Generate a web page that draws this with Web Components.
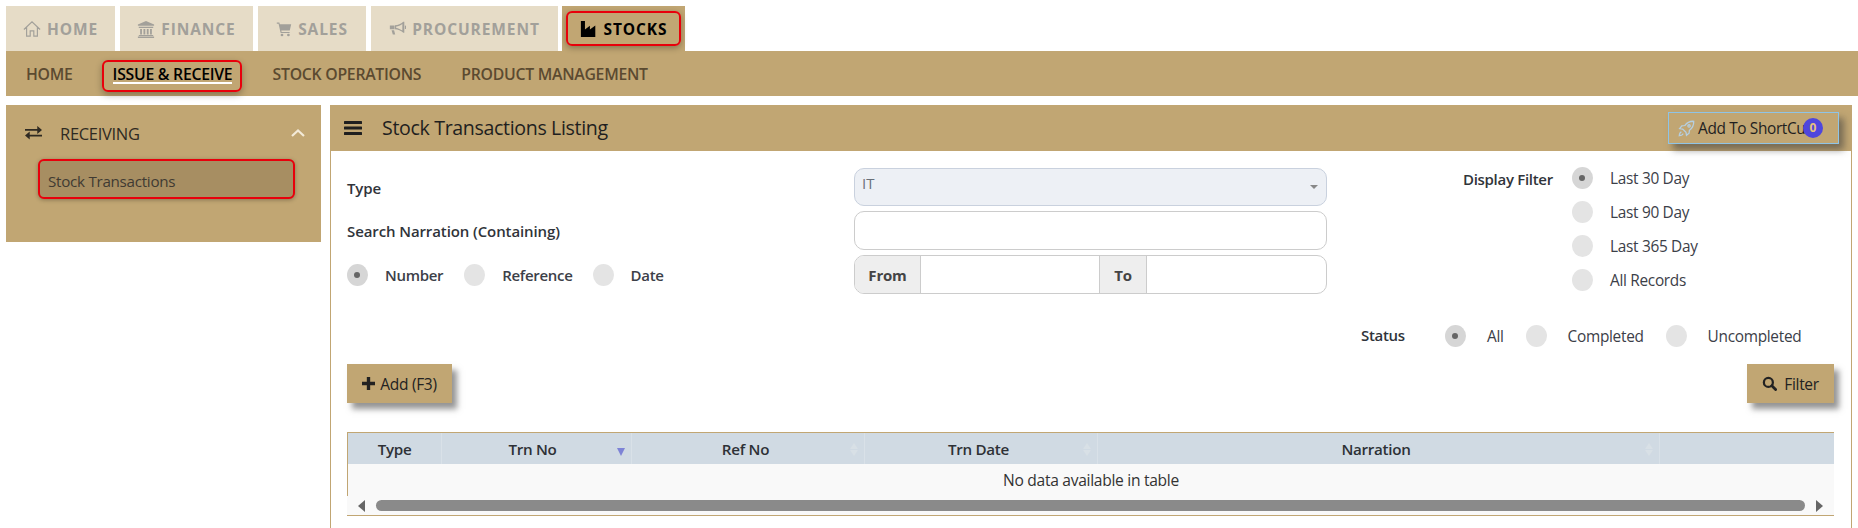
<!DOCTYPE html>
<html><head><meta charset="utf-8"><title>Stock Transactions Listing</title>
<style>
html,body{margin:0;padding:0;background:#fff;height:528px;overflow:hidden;font-family:"Open Sans","Noto Sans",sans-serif;color:#333}
</style></head><body>
<erp-app></erp-app>
<script>
const ICONS={
home:'<svg viewBox="0 0 20 20" width="18" height="18" fill="none" stroke="currentColor" stroke-width="1.3"><path d="M1 10.5 10 2l9 8.5M4 8v10h4v-6h4v6h4V8"/></svg>',
bank:'<svg viewBox="0 0 20 20" width="18" height="18" fill="currentColor"><path d="M10 1 1 5v1.5h18V5zM2 7.5h16V9H2zM3.5 10h2v6h-2zM7.2 10h2v6h-2zM10.9 10h2v6h-2zM14.5 10h2v6h-2zM2 16.7h16v1.2H2zM1 18.3h18V20H1z"/></svg>',
cart:'<svg viewBox="0 0 20 20" width="16" height="16" fill="currentColor"><path d="M1 2h3.2l.6 2H19l-1.8 8H6.6l.4 1.6h10V15H5.8L3.2 3.5H1z"/><circle cx="7.5" cy="17.5" r="1.7"/><circle cx="15.5" cy="17.5" r="1.7"/></svg>',
horn:'<svg viewBox="0 0 20 20" width="17" height="17" fill="currentColor"><path d="M18 2v13h-1.200C14 12.400 10.500 11 7 10.800V6.200C10.500 6 14 4.600 16.800 2zM15.700 4.600C13.500 6.300 11 7.300 8.500 7.700v1.600c2.500.4 5 1.400 7.200 3.100zM18.700 6.500a2 2 0 0 1 0 4zM1 6.500h5.500v4.500H1zM3 12h3l1.300 5H4.500z"/></svg>',
factory:'<svg viewBox="0 0 20 20" width="18" height="20" fill="currentColor"><path d="M1 1h4.500v9.500L11 6.500v4l6-4.500V19H1z"/></svg>',
swap:'<svg viewBox="0 0 18 14" width="17" height="14" fill="currentColor"><path d="M0 2.700h13V-.5l5 4.300-5 4.200V4.700H0z"/><path d="M18 10.800H5V14L0 9.700l5-4.200v3.300h13z"/></svg>',
bars:'<svg viewBox="0 0 18 14" width="18" height="14" fill="currentColor"><rect width="18" height="3" rx=".6"/><rect y="5.500" width="18" height="3" rx=".6"/><rect y="11" width="18" height="3" rx=".6"/></svg>',
rocket:'<svg viewBox="0 0 20 20" width="17" height="17" fill="none" stroke="#b5cfe2" stroke-width="1.500"><path d="M18.500 1.500c-4.500-.2-8 1.500-10.500 5L4.500 7 2 10l3.500.6 3.900 3.900.6 3.500 3-2.500.5-3.500c3.500-2.500 5.200-6 5-10.500z"/><circle cx="13" cy="7" r="1.400"/><path d="M4 14c-1.500.5-2.300 2-2.500 4.500 2.500-.2 4-1 4.500-2.500" /></svg>',
plus:'<svg viewBox="0 0 14 14" width="13" height="13" fill="currentColor"><path d="M5.200 0h3.600v5.200H14v3.600H8.800V14H5.200V8.800H0V5.200h5.200z"/></svg>',
search:'<svg viewBox="0 0 16 16" width="15" height="15" fill="none" stroke="currentColor"><circle cx="6.800" cy="6.800" r="4.800" stroke-width="2.400"/><path d="m10.500 10.500 4 4" stroke-width="3" stroke-linecap="round"/></svg>'
};
function def(name,css,html){
  class C extends HTMLElement{
    constructor(){super();this.attachShadow({mode:'open'});}
    connectedCallback(){this.shadowRoot.innerHTML='<style>'+css+'</style>'+(typeof html==='function'?html(this):html);}
  }
  customElements.define(name,C);
}
def('top-tab',`
:host{display:flex;align-items:center;justify-content:center;gap:6px;height:45px;box-sizing:border-box;background:#e6dcc7;color:#a2a09a;font:700 15.5px "Open Sans",sans-serif;letter-spacing:.9px}
:host([active]){background:#c1a673;color:#000}
.box{display:flex;align-items:center;gap:6px;}
:host([active]) .box{height:35px;width:115px;box-sizing:border-box;justify-content:center;border:2px solid #e8000b;border-radius:6px;box-shadow:0 2px 6px rgba(0,0,0,.3)}
svg{display:block}
`,h=>`<div class="box">${ICONS[h.getAttribute('icon')]}<slot></slot></div>`);
def('sub-item',`
:host{display:flex;align-items:center;height:45px;color:#5b4a30;font:600 15.8px "Open Sans",sans-serif;letter-spacing:-.27px;white-space:nowrap}
:host([active]) .box{color:#000;width:140px;height:32px;box-sizing:border-box;margin-top:5px;padding:3px 0 0 9px;border:2px solid #e8000b;border-radius:6px;box-shadow:0 3px 7px rgba(0,0,0,.3);display:flex;align-items:flex-start;line-height:18px}
:host([active]) span{border-bottom:2px solid #fff;display:block;height:17px}
`,`<div class="box"><span><slot></slot></span></div>`);
def('radio-opt',`
:host{display:inline-flex;align-items:center;font:15.4px "Open Sans",sans-serif;color:#3c4048;letter-spacing:-.3px;height:22px;gap:var(--g,17px)}
i{display:block;width:21px;height:22px;border-radius:50%;background:#e4e4e4;position:relative;flex:none}
:host([checked]) i{background:#d6d6d6}
:host([checked]) i::after{content:"";position:absolute;left:7px;top:8px;width:6px;height:6px;border-radius:50%;background:#666}
:host(.w){font-size:15px;font-weight:600;letter-spacing:-.3px}
`,`<i></i><span><slot></slot></span>`);
def('tan-btn',`
:host{display:flex;align-items:center;justify-content:center;gap:var(--bg,5px);height:39px;box-sizing:border-box;background:#c1a673;color:#222;font:15.500px "Open Sans",sans-serif;letter-spacing:-.3px;box-shadow:5px 6px 6px rgba(60,60,60,.55)}
svg{display:block}
`,h=>`${ICONS[h.getAttribute('icon')]}<slot></slot>`);
def('side-panel',`
:host{display:block;flex:none;width:315px;height:137px;background:#c1a673;box-sizing:border-box;padding-top:19px}
.head{display:flex;align-items:center;height:18px;padding:0 16px 0 19px;color:#2f2a22;font:16.500px "Open Sans",sans-serif;letter-spacing:-.3px}
.head svg:first-child{margin-right:18px}
.head span{flex:1}
.item{margin:17px 26px 0 32px;height:40px;box-sizing:border-box;background:#a78e62;border:2px solid #e8000b;border-radius:6px;padding:4px 0 0 8px;display:flex;align-items:center;color:#403a32;font:15.200px "Open Sans",sans-serif;letter-spacing:-.28px;box-shadow:0 1px 4px rgba(0,0,0,.3)}
`,`<div class="head">${ICONS.swap}<span>RECEIVING</span><svg width="14" height="8" viewBox="0 0 14 8" fill="none" stroke="#f3ead8" stroke-width="2.200"><path d="m1 7 6-5.500L13 7"/></svg></div><div class="item">Stock Transactions</div>`);
def('panel-head',`
:host{display:flex;align-items:center;height:46px;background:#c1a673;padding:0 13px 0 14px;box-sizing:border-box;color:#1f1f1f;position:relative;font:19.600px "Open Sans",sans-serif;letter-spacing:-.35px}
.t{flex:1;margin-left:20px;margin-top:-1px}
.sc{width:171px;height:32px;box-sizing:border-box;border:1px solid #8fc4e6;box-shadow:5px 6px 7px rgba(60,60,60,.55);display:flex;align-items:center;padding-left:9px;gap:3px;font-size:15.400px;letter-spacing:-.35px;position:relative;background:#c1a673;white-space:nowrap}
.b{position:absolute;left:134px;top:5px;width:20px;height:20px;border-radius:50%;background:#4f46dc;color:#e7c37b;font:700 12px/20px "Open Sans",sans-serif;text-align:center;letter-spacing:0}
svg{display:block;flex:none}
`,`${ICONS.bars}<span class="t">Stock Transactions Listing</span><div class="sc">${ICONS.rocket}<span>Add To ShortCut</span><span class="b">0</span></div>`);
def('form-field',`
:host{display:flex;align-items:center;box-sizing:border-box;width:473px;font:15px "Open Sans",sans-serif}
.sel{flex:1;height:38px;box-sizing:border-box;border:1px solid #c9d1de;border-radius:10px;background:#edf0f5;padding:0 8px 0 7px;color:#6a7079;display:flex;justify-content:space-between}
.sel span{margin-top:4px}
.sel i{margin-top:16px;width:0;height:0;border:4px solid transparent;border-top:4px solid #888;border-bottom:0}
.inp{flex:1;height:39px;box-sizing:border-box;border:1px solid #ccc;border-radius:10px;background:#fff}
.grp{flex:1;height:39px;box-sizing:border-box;border:1px solid #ccc;border-radius:10px;overflow:hidden;display:grid;grid-template-columns:66px 178px 48px 1fr;background:#fff}
.grp b{background:#eee;display:flex;align-items:center;justify-content:center;color:#444;font-weight:700;letter-spacing:-.2px;border-right:1px solid #ccc}
.grp b.to{border-left:1px solid #ccc}
`,h=>{const k=h.getAttribute('kind');
 if(k==='select')return `<div class="sel"><span>IT</span><i></i></div>`;
 if(k==='range')return `<div class="grp"><b>From</b><div></div><b class="to">To</b><div></div></div>`;
 return `<div class="inp"></div>`;});
def('data-grid',`
:host{display:block;font:15.200px "Open Sans",sans-serif;color:#333;letter-spacing:-.3px;border-top:1px solid #c1a673;border-bottom:1px solid #c1a673}
.h{display:grid;grid-template-columns:94px 190px 233px 233px 562px 175px;height:31px;background:#d0dae3;color:#2e3136;font-weight:600;border-left:1px solid #c1a673;box-sizing:border-box}
.c{display:flex;align-items:center;justify-content:center;position:relative;border-right:1px solid #d9e1e8;box-sizing:border-box}
.c:last-child{border-right:0}
.p5{padding-right:5px}
.p8{padding-right:8px}
.s{position:absolute;right:6px;top:10px;width:0;height:0;border:4.500px solid transparent;border-bottom:6px solid #d8e0e6;border-top:0}
.s::after{content:"";position:absolute;left:-4.500px;top:7px;width:0;height:0;border:4.500px solid transparent;border-top:6px solid #d8e0e6;border-bottom:0}
.d{position:absolute;right:6px;top:15px;width:0;height:0;border:4.500px solid transparent;border-top:8px solid #7d83d6;border-bottom:0}
.r{height:32px;background:#f9f9f9;display:flex;align-items:center;justify-content:center;color:#333;border-left:1px solid #c1a673;box-sizing:border-box;font-size:15.6px}
.bar{height:19px;background:#f9f9f9;display:flex;align-items:center;padding:0 11px;box-sizing:border-box;gap:11px}
.th{flex:1;height:11px;background:#8a8a8a;border-radius:6px}
.l{width:0;height:0;border:6px solid transparent;border-left:0;border-right:7px solid #666}
.rr{width:0;height:0;border:6px solid transparent;border-right:0;border-left:7px solid #666}
`,`<div class="h"><div class="c">Type</div><div class="c p8">Trn No<span class="d"></span></div><div class="c p5">Ref No<span class="s"></span></div><div class="c p5">Trn Date<span class="s"></span></div><div class="c p5">Narration<span class="s"></span></div><div class="c"></div></div><div class="r">No data available in table</div><div class="bar"><span class="l"></span><div class="th"></div><span class="rr"></span></div>`);
def('stock-form',`
:host{display:block;border:solid #c1a673;border-width:0 1px;padding:0 17px 0 16px;height:377px;box-sizing:border-box;font:15px "Open Sans",sans-serif;color:#333}
.top{display:flex;padding-top:10px;height:136px}
.left{width:507px;padding-top:7px;flex:none}
.row{height:39px;box-sizing:border-box;display:flex;align-items:center;margin-bottom:5px;font-weight:600;color:#30343a;letter-spacing:-.1px;white-space:nowrap}
.type{padding-top:1px}
.srch,.opts{padding-bottom:2px}
.mid{width:473px;flex:none;padding-top:7px;display:flex;flex-direction:column;gap:5px}
.right{margin-left:136px;display:flex}
.lab{font-weight:600;color:#30343a;letter-spacing:-.3px;width:109px;margin-top:8px;white-space:nowrap}
.col{display:flex;flex-direction:column;padding-top:6px;gap:12px}
.status{display:flex;align-items:center;margin-top:28px;height:22px;padding-left:1014px}
.status .lab{width:84px;margin-top:-3px;flex:none}
.sg{display:flex;gap:22px}
.sg radio-opt{--g:21px}
.btns{display:flex;justify-content:space-between;margin-top:17px;height:39px}
data-grid{margin-top:29px}
`,`<div class="top"><div class="left">
<div class="row type">Type</div><div class="row srch">Search Narration (Containing)</div>
<div class="row opts"><radio-opt checked class="w" style="margin-right:21px">Number</radio-opt><radio-opt class="w" style="margin-right:20px">Reference</radio-opt><radio-opt class="w">Date</radio-opt></div>
</div>
<div class="mid"><form-field kind="select"></form-field><form-field></form-field><form-field kind="range"></form-field></div>
<div class="right"><div class="lab">Display Filter</div><div class="col"><radio-opt checked>Last 30 Day</radio-opt><radio-opt>Last 90 Day</radio-opt><radio-opt>Last 365 Day</radio-opt><radio-opt>All Records</radio-opt></div></div>
</div>
<div class="status"><div class="lab">Status</div><div class="sg"><radio-opt checked>All</radio-opt><radio-opt>Completed</radio-opt><radio-opt>Uncompleted</radio-opt></div></div>
<div class="btns"><tan-btn icon="plus" style="width:105px">Add (F3)</tan-btn><tan-btn icon="search" style="width:87px;--bg:7px">Filter</tan-btn></div>
<data-grid></data-grid>`);
def('erp-app',`
:host{display:block;width:1858px;height:528px;overflow:hidden}
.tabs{display:flex;gap:5px;padding:6px 0 0 6px}
.sub{display:flex;margin-left:6px;height:45px;background:#c1a673;padding-left:20px}
.content{display:flex;gap:9px;margin:9px 6px 0}
.main{flex:1;min-width:0}
`,`<div class="tabs">
<top-tab icon="home" style="width:109px">HOME</top-tab><top-tab icon="bank" style="width:133px">FINANCE</top-tab><top-tab icon="cart" style="width:108px">SALES</top-tab><top-tab icon="horn" style="width:187px">PROCUREMENT</top-tab><top-tab icon="factory" active style="width:123px;margin-left:-1px">STOCKS</top-tab>
</div>
<div class="sub"><sub-item>HOME</sub-item><sub-item active style="margin-left:29px">ISSUE &amp; RECEIVE</sub-item><sub-item style="margin-left:31px">STOCK OPERATIONS</sub-item><sub-item style="margin-left:40px">PRODUCT MANAGEMENT</sub-item></div>
<div class="content"><side-panel></side-panel><div class="main"><panel-head></panel-head><stock-form></stock-form></div></div>`);
</script>
</body></html>
